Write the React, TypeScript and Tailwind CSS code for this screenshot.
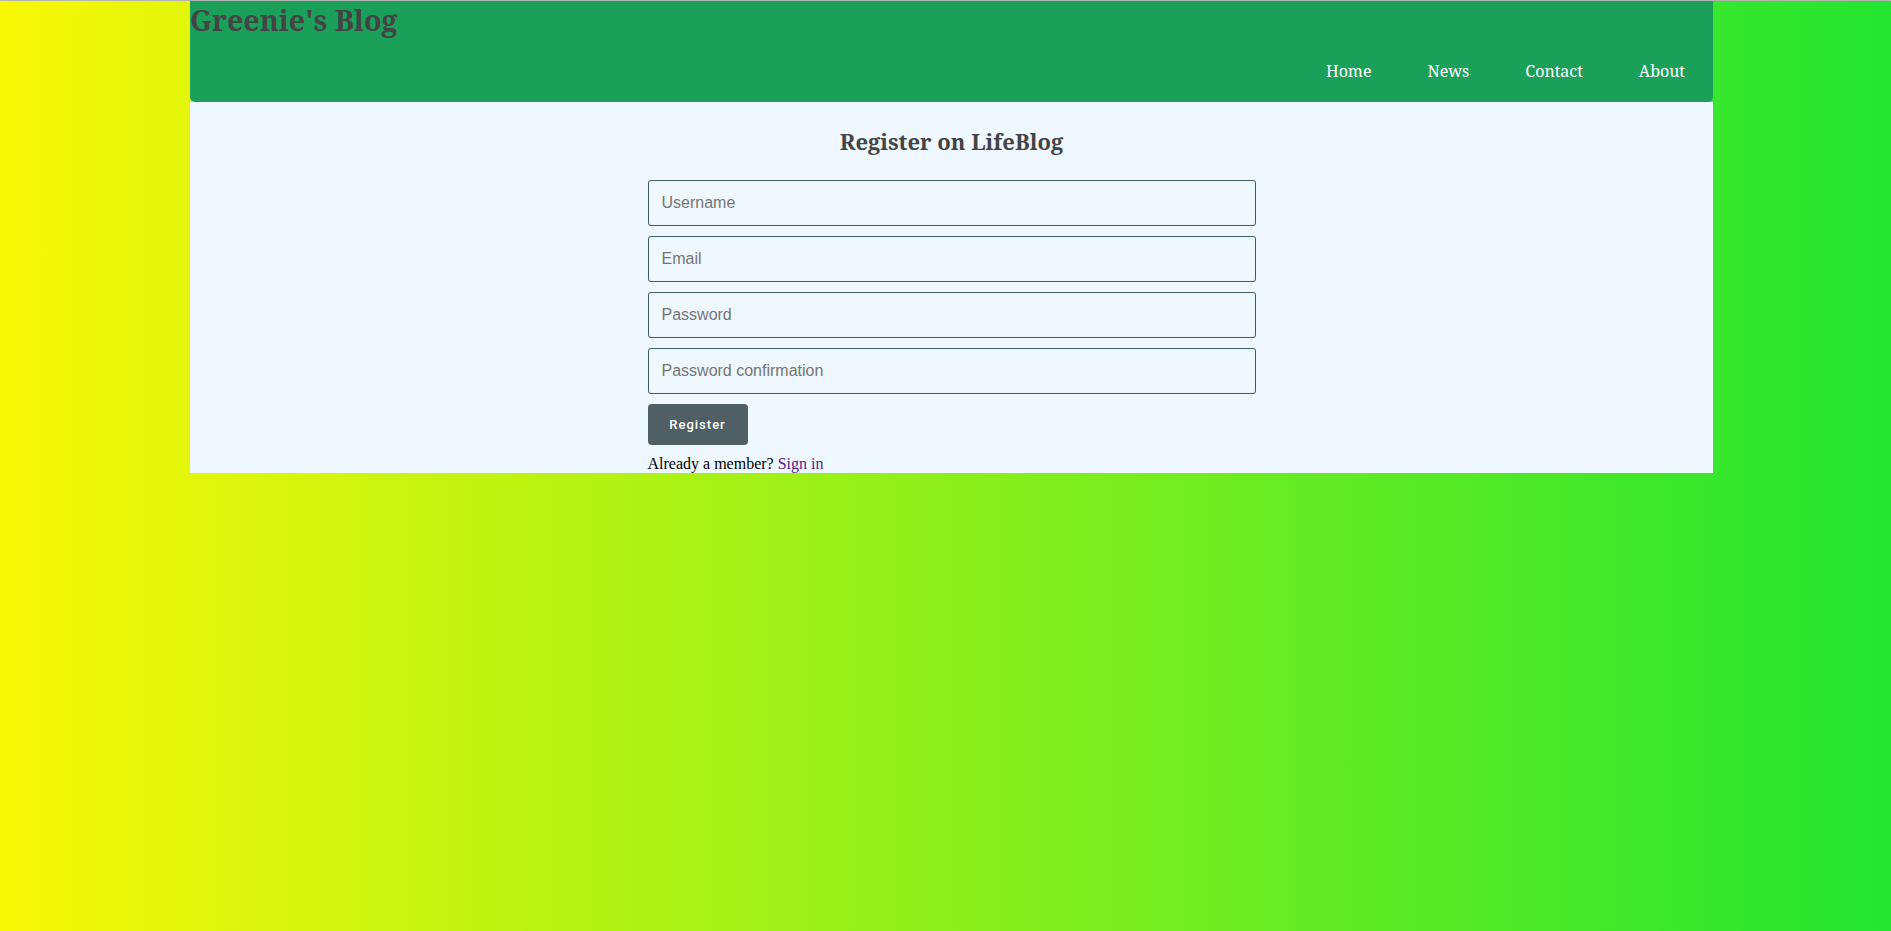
import React from 'react'

const links = ['Home', 'News', 'Contact', 'About']
const fields = [
  { name: 'username', type: 'text', label: 'Username' },
  { name: 'email', type: 'email', label: 'Email' },
  { name: 'password', type: 'password', label: 'Password' },
  { name: 'password_confirmation', type: 'password', label: 'Password confirmation' },
]

export default function App() {
  return (
    <div className="min-h-screen w-full border-t border-[#b4b4b4] bg-[linear-gradient(to_right,#f8f806,#23e530)]">
      <div className="ml-[190px] w-[1523px]">
        <header className="h-[101px] bg-[#1ba05a] rounded-b-[5px] flex flex-col">
          <h1 className="font-['Noto_Serif',serif] font-bold text-[28.6px] leading-[38px] text-[#444444]">
            Greenie's Blog
          </h1>
          <nav className="flex justify-end mt-[21px]">
            {links.map((link) => (
              <a key={link} href="#" className="px-[28px] font-['Noto_Serif',serif] text-[16px] leading-[22px] text-white">
                {link}
              </a>
            ))}
          </nav>
        </header>
        <main className="bg-[#eff7ff] pt-[24px] flex flex-col items-center">
          <h2 className="font-['Noto_Serif',serif] font-bold text-[22px] leading-[30px] text-[#444444]">
            Register on LifeBlog
          </h2>
          <form className="w-[608px] mt-[24px] flex flex-col">
            {fields.map((field) => (
              <input
                key={field.name}
                name={field.name}
                type={field.type}
                placeholder={field.label}
                className="h-[46px] mb-[10px] border border-[#3e5c6b] rounded-[3px] bg-transparent px-[13px] font-['Liberation_Sans',Arial,sans-serif] text-[16px] placeholder:text-[#757575] outline-none"
              />
            ))}
            <button type="button" className="w-[100px] h-[41px] bg-[#4f5f64] rounded-[4px] text-white font-['Roboto',Arial,sans-serif] font-medium text-[13px] tracking-[1px]">
              Register
            </button>
            <p className="mt-[10px] font-['Liberation_Serif','Times_New_Roman',serif] text-[16px] leading-[18px] text-black">
              Already a member? <a href="#" className="text-[#551a8b]">Sign in</a>
            </p>
          </form>
        </main>
      </div>
    </div>
  )
}
